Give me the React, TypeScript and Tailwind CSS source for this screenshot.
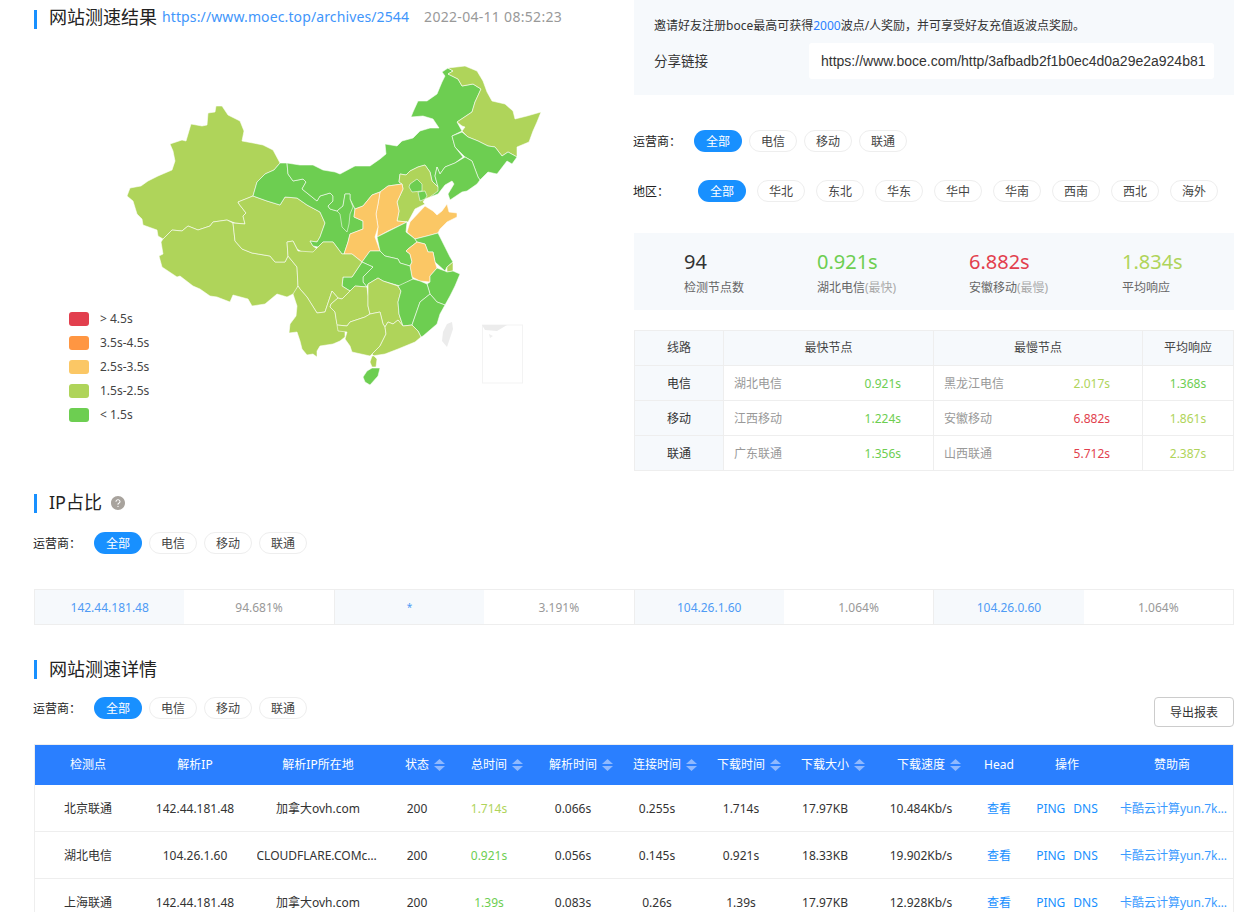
import React from 'react';
import { AiFillQuestionCircle } from 'react-icons/ai';

const GREEN = '#6dce51';
const LIME = '#afd45a';
const AMBER = '#fbc765';

const provinces: { fill: string; pts: string }[] = [
  // xinjiang
  { fill: LIME, pts: '280,164 273,151 263,146 253,144 242,142 244,132 240,122 228,116 222,107 216,107 215,113 208,114 207,126 202,127 191,125 186,142 182,141 170,145 173,152 175,162 172,171 158,177 148,182 141,187 130,189 127,197 133,202 137,215 142,220 143,226 157,231 158,237 163,240 172,231 182,232 188,227 198,231 210,227 213,223 227,221 235,224 245,225 243,217 246,214 239,205 238,203 253,197 257,183 265,175 274,171' },
  // tibet
  { fill: LIME, pts: '163,240 172,231 182,232 188,227 198,231 210,227 213,223 227,221 233,224 235,242 242,250 252,254 270,257 275,263 285,263 288,257 297,268 298,287 295,295 293,295 287,298 277,295 265,305 252,307 248,300 233,296 230,303 217,298 210,297 200,290 193,287 180,277 177,278 162,268 159,257 163,255 161,243' },
  // qinghai
  { fill: LIME, pts: '238,203 253,197 267,202 280,206 285,198 297,199 307,206 320,213 325,224 320,238 317,243 310,242 313,247 317,250 313,255 305,255 297,250 293,242 287,243 288,257 285,263 275,263 270,257 252,254 242,250 235,242 233,224 245,225 243,217 246,214 239,205' },
  // gansu
  { fill: GREEN, pts: '280,164 287,164 288,175 293,182 303,180 306,183 302,190 312,198 317,202 320,197 330,194 333,197 333,202 328,207 330,210 337,212 343,207 345,195 350,195 350,200 355,210 354,218 363,222 363,230 350,235 348,243 344,255 342,255 333,243 323,243 318,248 313,247 310,242 317,243 320,238 325,224 320,213 307,206 297,199 285,198 280,206 267,202 253,197 257,183 265,175 274,171' },
  // inner mongolia
  { fill: GREEN, pts: '442,73 448,69 453,72 448,75 458,80 462,87 473,85 481,90 475,103 472,113 457,123 462,132 452,137 455,148 463,158 455,164 445,168 440,175 437,168 435,177 438,188 432,182 430,173 425,166 418,168 410,172 406,176 400,175 399,183 402,185 388,187 380,193 372,196 363,207 355,210 350,200 350,195 345,195 343,207 337,212 330,210 328,207 333,202 333,197 330,194 320,197 317,202 312,198 302,190 306,183 303,180 293,182 288,175 287,164 300,166 313,166 323,171 335,173 340,175 355,167 370,167 380,160 386,155 385,145 397,147 402,142 413,139 420,132 430,129 439,129 433,120 423,117 411,118 413,113 418,102 427,102 437,95 442,83 445,77' },
  // ningxia
  { fill: GREEN, pts: '345,195 350,195 350,200 353,208 350,215 349,225 347,233 342,228 340,215 337,212 343,207' },
  // heilongjiang
  { fill: LIME, pts: '448,69 465,67 477,72 483,82 487,93 492,102 505,105 513,112 515,120 527,117 541,113 537,123 533,132 529,143 517,148 517,158 508,153 502,157 495,148 488,147 478,142 468,138 463,133 462,132 465,128 462,127 457,123 472,113 475,103 481,90 473,85 462,87 458,80 448,75 453,72' },
  // jilin
  { fill: GREEN, pts: '452,137 462,133 468,138 478,142 488,147 495,148 502,157 508,153 517,158 512,165 507,162 497,175 488,173 480,181 478,178 472,162 465,158 455,148' },
  // liaoning
  { fill: GREEN, pts: '438,188 435,177 437,168 440,175 445,168 455,164 465,158 472,162 478,178 480,181 477,185 467,192 462,193 450,201 448,195 454,185 452,182 445,186 438,195 430,198' },
  // hebei
  { fill: LIME, pts: '438,188 432,182 430,173 425,166 418,168 410,172 406,176 400,175 399,183 402,185 403,190 397,203 399,212 397,222 408,223 415,210 425,205 423,203 425,200 430,198 438,192' },
  // beijing
  { fill: GREEN, pts: '410,185 417,180 422,185 422,192 412,193 409,188' },
  // tianjin
  { fill: GREEN, pts: '418,193 425,192 427,197 425,200 420,202' },
  // shanxi
  { fill: AMBER, pts: '380,193 388,187 402,185 403,190 397,203 399,212 397,222 407,223 388,232 377,238 378,228 376,215 378,205' },
  // shaanxi
  { fill: AMBER, pts: '380,193 372,196 363,207 355,210 354,218 363,222 363,230 350,235 348,243 344,255 352,255 362,263 370,252 380,252 375,238 378,228 376,215 378,205' },
  // shandong
  { fill: AMBER, pts: '407,233 410,223 425,207 433,212 437,216 442,212 447,205 449,213 457,214 457,218 447,223 440,230 438,234 427,237 415,240' },
  // henan
  { fill: GREEN, pts: '377,238 407,223 406,233 415,240 417,243 408,250 406,252 410,255 412,263 410,267 400,264 398,260 385,257 380,252' },
  // jiangsu
  { fill: GREEN, pts: '415,240 427,237 438,234 445,248 450,258 453,263 447,268 445,272 435,263 433,253 428,253 425,245 417,243' },
  // shanghai
  { fill: LIME, pts: '447,268 453,263 453,272 447,273' },
  // anhui
  { fill: AMBER, pts: '417,243 425,245 428,253 433,253 435,263 437,269 430,277 430,283 420,282 412,278 410,267 412,263 410,255 406,252 408,250' },
  // zhejiang
  { fill: GREEN, pts: '437,269 445,272 447,273 453,272 460,275 455,287 450,297 445,306 437,303 430,295 427,285 430,283 430,277' },
  // hubei
  { fill: GREEN, pts: '363,283 363,278 373,268 362,263 370,252 380,252 385,257 398,260 400,264 410,267 412,278 413,280 400,287 383,282 378,279 368,285 367,288' },
  // chongqing
  { fill: GREEN, pts: '362,263 373,268 363,278 363,283 367,288 355,287 350,292 342,287 343,278 352,278' },
  // sichuan
  { fill: LIME, pts: '288,257 287,243 293,242 298,252 313,253 318,248 323,243 333,243 342,255 352,255 362,263 352,278 343,278 342,287 350,292 342,300 338,299 332,292 325,313 317,314 307,298 300,290 298,287 297,268' },
  // yunnan
  { fill: LIME, pts: '298,287 300,290 307,298 317,314 325,313 332,292 338,299 331,305 330,308 335,313 337,325 345,331 345,338 340,342 333,345 320,347 317,352 317,358 313,355 307,356 302,350 300,342 297,333 289,334 290,325 296,317 297,307 293,295' },
  // guizhou
  { fill: LIME, pts: '337,326 335,313 330,308 331,305 338,299 342,300 350,292 355,287 367,288 368,297 368,307 370,315 365,318 350,323 347,327' },
  // hunan
  { fill: LIME, pts: '370,315 368,307 368,285 378,279 383,282 398,287 401,292 398,303 399,315 403,327 398,321 393,325 388,323 385,328 383,325 380,313' },
  // jiangxi
  { fill: GREEN, pts: '413,280 420,282 427,285 430,295 420,303 412,326 403,327 399,315 398,303 401,292 398,287' },
  // fujian
  { fill: GREEN, pts: '430,295 437,303 445,306 440,315 437,325 423,337 421,338 418,332 412,326 420,303' },
  // guangxi
  { fill: LIME, pts: '337,326 347,327 350,323 365,318 370,315 380,313 383,325 385,328 386,335 380,347 372,355 370,357 352,353 350,347 345,340 347,333 338,332' },
  // guangdong
  { fill: LIME, pts: '385,328 388,323 393,325 398,321 403,327 412,326 418,332 421,338 415,343 398,350 385,355 372,357 370,363 372,368 376,368 377,360 372,355 380,347 386,335' },
  // hainan
  { fill: GREEN, pts: '367,372 372,369 380,369 378,377 370,386 365,383 363,378' },
];

const ChinaMap = () => (
  <svg viewBox="34 40 600 360" className="block w-[600px] h-[360px]">
    {provinces.map((p, i) => (
      <polygon key={i} points={p.pts} fill={p.fill} stroke="#ffffff" strokeOpacity="0.8" strokeWidth="0.7" strokeLinejoin="round" />
    ))}
    <polygon points="447,325 452,323 453,330 447,348 442,342 443,333" fill="#ececec" />
    <rect x="482.5" y="326" width="40" height="58" fill="none" stroke="#f3f3f3" />
    <polygon points="482,326 507,326 497,332 485,331" fill="#ececec" />
    <polygon points="489,335 493,337 490,339" fill="#eeeeee" />
  </svg>
);

const legend = [
  { color: '#e23f4e', label: '> 4.5s' },
  { color: '#ff9642', label: '3.5s-4.5s' },
  { color: AMBER, label: '2.5s-3.5s' },
  { color: LIME, label: '1.5s-2.5s' },
  { color: GREEN, label: '< 1.5s' },
];

const Heading = ({ children, shift }: { children: React.ReactNode; shift: string }) => (
  <div className="flex items-center h-[19px]">
    <span className="w-[3px] h-[19px] bg-[#1890ff]" />
    <span className={`ml-3 text-[18px] leading-[19px] text-[#222] whitespace-nowrap ${shift}`}>{children}</span>
  </div>
);

const Pills = ({ label, items, labelWidth, gap }: { label: string; items: string[]; labelWidth: string; gap: string }) => (
  <div className="flex items-center h-[22px] text-[12px]">
    <span className={`${labelWidth} -ml-px pt-px text-[#222]`}>{label}</span>
    <div className={`flex ${gap}`}>
      {items.map((item, i) => (
        <span
          key={item}
          className={
            i === 0
              ? 'w-[48px] h-[22px] pt-px rounded-full bg-[#1890ff] text-white flex items-center justify-center'
              : 'w-[48px] h-[22px] pt-px rounded-full border border-[#eeeeee] text-[#444] flex items-center justify-center'
          }
        >
          {item}
        </span>
      ))}
    </div>
  </div>
);

const carriers = ['全部', '电信', '移动', '联通'];
const regions = ['全部', '华北', '东北', '华东', '华中', '华南', '西南', '西北', '海外'];

const lineRows = [
  { line: '电信', fast: '湖北电信', fastT: '0.921s', fastC: 'text-[#6dce51]', slow: '黑龙江电信', slowT: '2.017s', slowC: 'text-[#afd45a]', avg: '1.368s', avgC: 'text-[#6dce51]' },
  { line: '移动', fast: '江西移动', fastT: '1.224s', fastC: 'text-[#6dce51]', slow: '安徽移动', slowT: '6.882s', slowC: 'text-[#e23f4e]', avg: '1.861s', avgC: 'text-[#afd45a]' },
  { line: '联通', fast: '广东联通', fastT: '1.356s', fastC: 'text-[#6dce51]', slow: '山西联通', slowT: '5.712s', slowC: 'text-[#e23f4e]', avg: '2.387s', avgC: 'text-[#afd45a]' },
];

const ipShares = [
  { ip: '142.44.181.48', pct: '94.681%' },
  { ip: '*', pct: '3.191%' },
  { ip: '104.26.1.60', pct: '1.064%' },
  { ip: '104.26.0.60', pct: '1.064%' },
];

const gridCols = 'grid grid-cols-[108px_106px_140px_58px_86px_82px_86px_82px_86px_106px_50px_86px_124px]';

const SortIcon = () => (
  <svg viewBox="0 0 11 12" className="absolute left-full top-1/2 -translate-y-1/2 ml-[5px] w-[11px] h-[12px]">
    <path d="M5.5 0 L11 5 H0 Z M0 7 H11 L5.5 12 Z" fill="#8fb9ff" />
  </svg>
);

const headCells = [
  { t: '检测点' },
  { t: '解析IP' },
  { t: '解析IP所在地' },
  { t: '状态', sort: true },
  { t: '总时间', sort: true },
  { t: '解析时间', sort: true },
  { t: '连接时间', sort: true },
  { t: '下载时间', sort: true },
  { t: '下载大小', sort: true },
  { t: '下载速度', sort: true },
  { t: 'Head' },
  { t: '操作' },
  { t: '赞助商' },
];

const detailRows = [
  { node: '北京联通', ip: '142.44.181.48', loc: '加拿大ovh.com', total: '1.714s', totalC: 'text-[#afd45a]', dns: '0.066s', conn: '0.255s', down: '1.714s', size: '17.97KB', speed: '10.484Kb/s' },
  { node: '湖北电信', ip: '104.26.1.60', loc: 'CLOUDFLARE.COMcloudflare.com', total: '0.921s', totalC: 'text-[#6dce51]', dns: '0.056s', conn: '0.145s', down: '0.921s', size: '18.33KB', speed: '19.902Kb/s' },
  { node: '上海联通', ip: '142.44.181.48', loc: '加拿大ovh.com', total: '1.39s', totalC: 'text-[#6dce51]', dns: '0.083s', conn: '0.26s', down: '1.39s', size: '17.97KB', speed: '12.928Kb/s' },
];

const App = () => {
  return (
    <div className="w-[1237px] h-[912px] overflow-hidden bg-white pl-[34px] font-['Noto_Sans','Noto_Sans_CJK_SC',sans-serif] text-[#333]">
      <section className="flex h-[471px]">
        <div className="relative w-[600px] pt-[9px]">
          <div className="flex items-center">
            <Heading shift="-translate-y-[2px]">网站测速结果</Heading>
            <a className="ml-[5px] text-[14px] tracking-[0.12px] text-[#3f96fb] -translate-y-[3px]">https://www.moec.top/archives/2544</a>
            <span className="ml-[15px] text-[14px] tracking-[0.3px] text-[#999] -translate-y-[3px]">2022-04-11 08:52:23</span>
          </div>
          <div className="mt-[9px]">
            <ChinaMap />
          </div>
          <ul className="absolute left-[35px] top-[312px] flex flex-col gap-[10px] text-[12px] text-[#444]">
            {legend.map((l) => (
              <li key={l.label} className="flex items-center h-[14px]">
                <span className="w-[20px] h-[14px] rounded-[3px]" style={{ backgroundColor: l.color }} />
                <span className="ml-[11px]">{l.label}</span>
              </li>
            ))}
          </ul>
        </div>

        <div className="w-[600px]">
          <div className="h-[95px] bg-[#f6f9fc] pl-5 pr-5">
            <p className="pt-[17px] text-[12px] leading-[18px] text-[#333]">
              邀请好友注册boce最高可获得<span className="text-[#2a7fff]">2000</span>波点/人奖励，并可享受好友充值返波点奖励。
            </p>
            <div className="mt-[8px] flex items-center">
              <span className="w-[155px] text-[13.5px] text-[#333]">分享链接</span>
              <div className="w-[405px] h-[36px] bg-white rounded-[3px] flex items-center pl-3 overflow-hidden whitespace-nowrap text-[14px] text-[#333] font-['Liberation_Sans',sans-serif]">
                https://www.boce.com/http/3afbadb2f1b0ec4d0a29e2a924b81
              </div>
            </div>
          </div>

          <div className="mt-[35px]">
            <Pills label="运营商：" items={carriers} labelWidth="w-[61px]" gap="gap-[7px]" />
          </div>
          <div className="mt-[28px]">
            <Pills label="地区：" items={regions} labelWidth="w-[65px]" gap="gap-[11px]" />
          </div>

          <div className="mt-[31px] h-[77px] bg-[#f6f9fc] flex pl-[50px] pt-[15px]">
            <div className="w-[133px]">
              <div className="text-[20px] leading-[28px] text-[#333]">94</div>
              <div className="mt-[3px] text-[12px] text-[#666]">检测节点数</div>
            </div>
            <div className="w-[152px]">
              <div className="text-[20px] leading-[28px] text-[#6dce51]">0.921s</div>
              <div className="mt-[3px] text-[12px] text-[#666]">湖北电信<span className="text-[#aaa]">(最快)</span></div>
            </div>
            <div className="w-[153px]">
              <div className="text-[20px] leading-[28px] text-[#e23f4e]">6.882s</div>
              <div className="mt-[3px] text-[12px] text-[#666]">安徽移动<span className="text-[#aaa]">(最慢)</span></div>
            </div>
            <div>
              <div className="text-[20px] leading-[28px] text-[#afd45a]">1.834s</div>
              <div className="mt-[3px] text-[12px] text-[#666]">平均响应</div>
            </div>
          </div>

          <div className="mt-[20px] border border-[#eeeeee] text-[12px]">
            <div className="grid grid-cols-[89px_210px_209px_1fr] h-[34px] bg-[#f6f9fc] text-[#444] text-center leading-[34px]">
              <div className="border-r border-[#eeeeee]">线路</div>
              <div className="border-r border-[#eeeeee]">最快节点</div>
              <div className="border-r border-[#eeeeee]">最慢节点</div>
              <div>平均响应</div>
            </div>
            {lineRows.map((r) => (
              <div key={r.line} className="grid grid-cols-[89px_210px_209px_1fr] h-[35px] border-t border-[#eeeeee] leading-[32px]">
                <div className="border-r border-[#eeeeee] bg-[#f6f9fc] pt-[2px] text-center text-[#333]">{r.line}</div>
                <div className="border-r border-[#eeeeee] flex justify-between pt-[2px] pl-[10px] pr-[32px]">
                  <span className="text-[#999]">{r.fast}</span>
                  <span className={r.fastC}>{r.fastT}</span>
                </div>
                <div className="border-r border-[#eeeeee] flex justify-between pt-[2px] pl-[10px] pr-[32px]">
                  <span className="text-[#999]">{r.slow}</span>
                  <span className={r.slowC}>{r.slowT}</span>
                </div>
                <div className={`pt-[2px] text-center ${r.avgC}`}>{r.avg}</div>
              </div>
            ))}
          </div>
        </div>
      </section>

      <section className="mt-[23px]">
        <div className="flex items-center">
          <Heading shift="-translate-y-px">IP占比</Heading>
          <AiFillQuestionCircle className="ml-[8px] text-[16px] text-[#a8a39d] -translate-y-px" />
        </div>
        <div className="mt-[19px]">
          <Pills label="运营商：" items={carriers} labelWidth="w-[61px]" gap="gap-[7px]" />
        </div>
        <div className="mt-[35px] flex w-[1200px] h-[36px] border border-[#eeeeee] text-[12px] leading-[35px]">
          {ipShares.map((s, i) => (
            <div key={s.ip + i} className={i < 3 ? 'flex-1 flex border-r border-[#eeeeee]' : 'flex-1 flex'}>
              <div className={s.ip === '*' ? 'w-1/2 bg-[#f6f9fc] text-center text-[10px] text-[#4f9bf5]' : 'w-1/2 bg-[#f6f9fc] text-center text-[#4f9bf5]'}>{s.ip}</div>
              <div className="w-1/2 text-center text-[#999]">{s.pct}</div>
            </div>
          ))}
        </div>
      </section>

      <section className="mt-[35px]">
        <Heading shift="translate-y-0">网站测速详情</Heading>
        <div className="mt-[18px] flex items-start justify-between w-[1200px]">
          <Pills label="运营商：" items={carriers} labelWidth="w-[61px]" gap="gap-[7px]" />
          <button className="w-[80px] h-[30px] pt-px border border-[#cccccc] rounded-[4px] text-[12px] text-[#333] bg-white">导出报表</button>
        </div>
        <div className="mt-[17px] w-[1200px] text-[12px] shadow-[inset_1px_0_0_#eeeeee,inset_-1px_0_0_#eeeeee]">
          <div className={`${gridCols} h-[41px] bg-[#2a7fff] text-white items-center text-center shadow-[inset_0_1px_0_#eeeeee,inset_1px_0_0_#eeeeee,inset_-1px_0_0_#eeeeee]`}>
            {headCells.map((c) => (
              <div key={c.t}>
                <span className="relative inline-block">
                  {c.t}
                  {c.sort && <SortIcon />}
                </span>
              </div>
            ))}
          </div>
          {detailRows.map((r) => (
            <div key={r.node} className={`${gridCols} h-[47px] pt-[2px] border-b border-[#eeeeee] items-center text-center text-[#333]`}>
              <div>{r.node}</div>
              <div>{r.ip}</div>
              <div><span className="block mx-auto max-w-[123px] truncate">{r.loc}</span></div>
              <div>200</div>
              <div className={r.totalC}>{r.total}</div>
              <div>{r.dns}</div>
              <div>{r.conn}</div>
              <div>{r.down}</div>
              <div>{r.size}</div>
              <div>{r.speed}</div>
              <div className="text-[#1890ff]">查看</div>
              <div className="text-[#1890ff] flex justify-center gap-[8px]"><span>PING</span><span>DNS</span></div>
              <div className="text-[#3b9bff] truncate pl-[10px] pr-[6px]">卡酷云计算yun.7kuyun.com</div>
            </div>
          ))}
        </div>
      </section>
    </div>
  );
};

export default App;
